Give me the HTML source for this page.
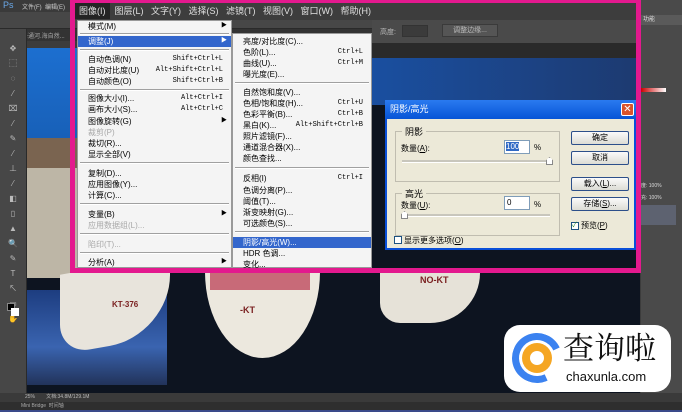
<!DOCTYPE html>
<html><head><meta charset="utf-8"><style>
*{margin:0;padding:0;box-sizing:border-box}
body{width:682px;height:412px;overflow:hidden;background:#3c3c3c;position:relative;font-family:"Liberation Sans","Noto Sans CJK SC",sans-serif;font-size:8px;color:#000}
.a{position:absolute}
.mi{position:absolute;left:0;right:0;height:11px;line-height:11px;padding-left:10px;white-space:nowrap}
.mi .k{position:absolute;right:8px;top:0;font-family:"Liberation Mono",monospace;font-size:7px}
.sep{position:absolute;left:2px;right:2px;height:2px;border-top:1px solid #a0a0a0;border-bottom:1px solid #fff}
.dis{color:#a8a8a8}
.hl{background:#3366cc;color:#fff}
.arr{position:absolute;right:4px;font-size:6px}
.btn{position:absolute;left:571px;width:58px;height:14px;border:1px solid #2c4f8a;border-radius:2px;background:linear-gradient(#fafafa,#dcdcd4);text-align:center;line-height:12px;font-size:8px}
</style></head><body>
<!-- photo background -->
<div class="a" style="left:27px;top:48px;width:613px;height:345px;background:#0d1420"></div>
<div class="a" style="left:27px;top:48px;width:50px;height:90px;background:linear-gradient(#1c6fd0,#1860b8)"></div>
<div class="a" style="left:27px;top:138px;width:50px;height:30px;background:#7a6450"></div>
<div class="a" style="left:27px;top:168px;width:50px;height:110px;background:#bdb6a6"></div>
<div class="a" style="left:372px;top:55px;width:268px;height:50px;background:linear-gradient(90deg,#1a4fa0,#1d3a70)"></div>
<div class="a" style="left:27px;top:290px;width:140px;height:95px;background:linear-gradient(#1d3d80,#3a64b0 60%,#22335a)"></div>
<div class="a" style="left:60px;top:265px;width:110px;height:80px;background:#e8e4dc;border-radius:0 0 60px 30px;transform:skewY(-10deg)"></div>
<div class="a" style="left:205px;top:268px;width:115px;height:90px;background:#ece8de;border-radius:0 0 60px 60px / 0 0 90px 90px"></div>
<div class="a" style="left:210px;top:270px;width:100px;height:20px;background:#c86a78"></div>
<div class="a" style="left:380px;top:268px;width:100px;height:55px;background:#e6e2d8;border-radius:0 0 50px 20px"></div>
<div class="a" style="left:420px;top:275px;font-size:9px;font-weight:bold;color:#7a2020">NO-KT</div>
<div class="a" style="left:240px;top:305px;font-size:9px;font-weight:bold;color:#7a2020">-KT</div>
<div class="a" style="left:112px;top:300px;font-size:8px;font-weight:bold;color:#7a2020">KT-376</div>
<!-- top PS bars -->
<div class="a" style="left:0;top:0;width:682px;height:12px;background:#3a3a3a"></div>
<div class="a" style="left:3px;top:0;color:#6aa8e8;font-size:9px">Ps</div>
<div class="a" style="left:22px;top:2px;color:#ccc;font-size:6px">文件(F)&nbsp;&nbsp;编辑(E)</div>
<div class="a" style="left:0;top:12px;width:682px;height:17px;background:#474747;border-bottom:1px solid #2a2a2a"></div>
<div class="a" style="left:0;top:29px;width:682px;height:12px;background:#333"></div>
<div class="a" style="left:22px;top:31px;color:#aaa;font-size:6px">卡通河.海自然...</div>
<div class="a" style="left:0;top:29px;width:27px;height:364px;background:#474747;border-right:1px solid #2a2a2a"></div>
<div class="a" style="left:6px;top:41px;width:14px;height:260px;color:#bbb;font-size:8px;line-height:15px;text-align:center">✥<br>⬚<br>◌<br>⁄<br>⌧<br>⁄<br>✎<br>⁄<br>⊥<br>⁄<br>◧<br>▯<br>▲<br>🔍<br>✎<br>T<br>↖<br>▭<br>✋</div>
<div class="a" style="left:7px;top:303px;width:8px;height:8px;background:#000;border:1px solid #888"></div>
<div class="a" style="left:11px;top:308px;width:8px;height:8px;background:#fff"></div>
<!-- right panel -->
<div class="a" style="left:641px;top:0;width:41px;height:393px;background:#4a4a4a"></div>
<div class="a" style="left:641px;top:15px;width:41px;height:10px;background:#5a5a5a;color:#ddd;font-size:6px;line-height:10px;padding-left:2px">功能</div>
<div class="a" style="left:641px;top:88px;width:25px;height:4px;background:linear-gradient(90deg,#c00,#fff)"></div>
<div class="a" style="left:641px;top:180px;width:41px;height:30px;color:#ddd;font-size:5px;line-height:12px">度: 100%<br>充: 100%</div>
<div class="a" style="left:641px;top:205px;width:35px;height:20px;background:#5d6270"></div>
<!-- status bars -->
<div class="a" style="left:0;top:393px;width:682px;height:9px;background:#3a3a3a;color:#bbb;font-size:5px;line-height:9px;padding-left:25px">25%&nbsp;&nbsp;&nbsp;&nbsp;&nbsp;&nbsp;&nbsp;&nbsp;文档:34.8M/129.1M</div>
<div class="a" style="left:0;top:402px;width:682px;height:8px;background:#2e2e2e;color:#aaa;font-size:5px;line-height:8px;padding-left:21px">Mini Bridge&nbsp;&nbsp;时间轴</div>
<div class="a" style="left:0;top:410px;width:682px;height:2px;background:#3a4a8a"></div>
<!-- magenta frame -->
<div class="a" style="left:70px;top:0;width:571px;height:273px;border:5px solid #e3198e;border-top-width:3px"></div>
<!-- menu bar -->
<div class="a" style="left:75px;top:3px;width:561px;height:17px;background:#3d3d3d;color:#e0e0e0;font-size:9px;line-height:17px;white-space:nowrap">
<span style="background:#242424;padding:3px 4px">图像(I)</span>&nbsp;&nbsp;图层(L)&nbsp;&nbsp;&nbsp;文字(Y)&nbsp;&nbsp;&nbsp;选择(S)&nbsp;&nbsp;&nbsp;滤镜(T)&nbsp;&nbsp;&nbsp;视图(V)&nbsp;&nbsp;&nbsp;窗口(W)&nbsp;&nbsp;&nbsp;帮助(H)</div>
<div class="a" style="left:372px;top:20px;width:264px;height:23px;background:#4a4a4a"></div>
<div class="a" style="left:380px;top:27px;color:#bbb;font-size:7px">高度:</div>
<div class="a" style="left:402px;top:25px;width:26px;height:12px;background:#3b3b3b;border:1px solid #333"></div>
<div class="a" style="left:442px;top:24px;width:56px;height:13px;background:#555;border:1px solid #3a3a3a;color:#bbb;font-size:7px;text-align:center;line-height:12px">调整边缘...</div>
<div class="a" style="left:372px;top:43px;width:264px;height:15px;background:#2a2a2a"></div>
<!-- main menu -->
<div class="a" style="left:77px;top:20px;width:155px;height:248px;background:#f4f4f4;border:1px solid #999">
<div class="mi" style="top:0">模式(M)<span class="arr">▶</span></div>
<div class="sep" style="top:12px"></div>
<div class="mi hl" style="top:15px">调整(J)<span class="arr">▶</span></div>
<div class="sep" style="top:28px"></div>
<div class="mi" style="top:33px">自动色调(N)<span class="k">Shift+Ctrl+L</span></div>
<div class="mi" style="top:44px">自动对比度(U)<span class="k">Alt+Shift+Ctrl+L</span></div>
<div class="mi" style="top:55px">自动颜色(O)<span class="k">Shift+Ctrl+B</span></div>
<div class="sep" style="top:68px"></div>
<div class="mi" style="top:72px">图像大小(I)...<span class="k">Alt+Ctrl+I</span></div>
<div class="mi" style="top:83px">画布大小(S)...<span class="k">Alt+Ctrl+C</span></div>
<div class="mi" style="top:95px">图像旋转(G)<span class="arr">▶</span></div>
<div class="mi dis" style="top:106px">裁剪(P)</div>
<div class="mi" style="top:117px">裁切(R)...</div>
<div class="mi" style="top:128px">显示全部(V)</div>
<div class="sep" style="top:141px"></div>
<div class="mi" style="top:147px">复制(D)...</div>
<div class="mi" style="top:158px">应用图像(Y)...</div>
<div class="mi" style="top:169px">计算(C)...</div>
<div class="sep" style="top:182px"></div>
<div class="mi" style="top:188px">变量(B)<span class="arr">▶</span></div>
<div class="mi dis" style="top:199px">应用数据组(L)...</div>
<div class="sep" style="top:212px"></div>
<div class="mi dis" style="top:218px">陷印(T)...</div>
<div class="sep" style="top:231px"></div>
<div class="mi" style="top:236px">分析(A)<span class="arr">▶</span></div>
</div>
<!-- submenu -->
<div class="a" style="left:232px;top:33px;width:140px;height:235px;background:#f4f4f4;border:1px solid #999">
<div class="mi" style="top:2px">亮度/对比度(C)...</div>
<div class="mi" style="top:13px">色阶(L)...<span class="k">Ctrl+L</span></div>
<div class="mi" style="top:24px">曲线(U)...<span class="k">Ctrl+M</span></div>
<div class="mi" style="top:35px">曝光度(E)...</div>
<div class="sep" style="top:48px"></div>
<div class="mi" style="top:53px">自然饱和度(V)...</div>
<div class="mi" style="top:64px">色相/饱和度(H)...<span class="k">Ctrl+U</span></div>
<div class="mi" style="top:75px">色彩平衡(B)...<span class="k">Ctrl+B</span></div>
<div class="mi" style="top:86px">黑白(K)...<span class="k">Alt+Shift+Ctrl+B</span></div>
<div class="mi" style="top:97px">照片滤镜(F)...</div>
<div class="mi" style="top:108px">通道混合器(X)...</div>
<div class="mi" style="top:119px">颜色查找...</div>
<div class="sep" style="top:133px"></div>
<div class="mi" style="top:139px">反相(I)<span class="k">Ctrl+I</span></div>
<div class="mi" style="top:151px">色调分离(P)...</div>
<div class="mi" style="top:162px">阈值(T)...</div>
<div class="mi" style="top:173px">渐变映射(G)...</div>
<div class="mi" style="top:184px">可选颜色(S)...</div>
<div class="sep" style="top:197px"></div>
<div class="mi hl" style="top:203px">阴影/高光(W)...</div>
<div class="mi" style="top:214px">HDR 色调...</div>
<div class="mi" style="top:225px">变化...</div>
</div>
<!-- dialog -->
<div class="a" style="left:385px;top:100px;width:251px;height:150px;background:#ece9d8;border:2px solid #0a4fd8;border-top:0"></div>
<div class="a" style="left:385px;top:100px;width:251px;height:19px;background:linear-gradient(#2a7af0,#0654d6);color:#fff;font-size:9px;line-height:19px;padding-left:5px">阴影/高光</div>
<div class="a" style="left:621px;top:103px;width:13px;height:13px;background:#d9532b;border:1px solid #fff;border-radius:2px;color:#fff;font-size:10px;line-height:11px;text-align:center">✕</div>
<div class="a" style="left:395px;top:131px;width:165px;height:51px;border:1px solid #c0bdb0"></div>
<div class="a" style="left:402px;top:125px;background:#ece9d8;padding:0 3px;font-size:9px">阴影</div>
<div class="a" style="left:401px;top:143px;font-size:8px">数量(<u>A</u>):</div>
<div class="a" style="left:504px;top:140px;width:26px;height:14px;background:#fff;border:1px solid #7f9db9;font-size:8px;padding:1px"><span style="background:#316ac5;color:#fff">100</span></div>
<div class="a" style="left:534px;top:143px;font-size:8px">%</div>
<div class="a" style="left:402px;top:160px;width:148px;height:3px;background:#c8c6bc;border-bottom:1px solid #fff"></div>
<div class="a" style="left:546px;top:157px;width:7px;height:8px;border:1px solid #888;background:#fff;clip-path:polygon(50% 0,100% 40%,100% 100%,0 100%,0 40%)"></div>
<div class="a" style="left:395px;top:193px;width:165px;height:43px;border:1px solid #c0bdb0"></div>
<div class="a" style="left:402px;top:187px;background:#ece9d8;padding:0 3px;font-size:9px">高光</div>
<div class="a" style="left:401px;top:200px;font-size:8px">数量(<u>U</u>):</div>
<div class="a" style="left:504px;top:196px;width:26px;height:14px;background:#fff;border:1px solid #7f9db9;font-size:8px;padding:1px 2px">0</div>
<div class="a" style="left:534px;top:200px;font-size:8px">%</div>
<div class="a" style="left:402px;top:214px;width:148px;height:3px;background:#c8c6bc;border-bottom:1px solid #fff"></div>
<div class="a" style="left:401px;top:211px;width:7px;height:8px;border:1px solid #888;background:#fff;clip-path:polygon(50% 0,100% 40%,100% 100%,0 100%,0 40%)"></div>
<div class="a" style="left:394px;top:236px;width:8px;height:8px;border:1px solid #1c5180;background:#fff"></div>
<div class="a" style="left:404px;top:235px;font-size:8px">显示更多选项(<u>O</u>)</div>
<div class="btn" style="top:131px">确定</div>
<div class="btn" style="top:151px">取消</div>
<div class="btn" style="top:177px">载入(<u>L</u>)...</div>
<div class="btn" style="top:197px">存储(<u>S</u>)...</div>
<div class="a" style="left:571px;top:222px;width:8px;height:8px;border:1px solid #1c5180;background:#fff;font-size:7px;line-height:6px;color:#2a8a2a">✓</div>
<div class="a" style="left:581px;top:220px;font-size:8px">预览(<u>P</u>)</div>
<!-- watermark -->
<div class="a" style="left:504px;top:325px;width:167px;height:67px;background:#fff;border-radius:16px"></div>
<div class="a" style="left:512px;top:333px;width:50px;height:50px;border-radius:50%;border:7px solid #3b82f0;border-right-color:transparent;transform:rotate(20deg)"></div>
<div class="a" style="left:522px;top:343px;width:30px;height:30px;border-radius:50%;background:#f5a623"></div>
<div class="a" style="left:530px;top:351px;width:14px;height:14px;border-radius:50%;background:#fff"></div>
<div class="a" style="left:563px;top:326px;font-family:'Noto Serif CJK SC',serif;font-size:31px;line-height:40px;color:#111">查询啦</div>
<div class="a" style="left:566px;top:369px;font-size:13px;color:#111">chaxunla.com</div>
</body></html>
